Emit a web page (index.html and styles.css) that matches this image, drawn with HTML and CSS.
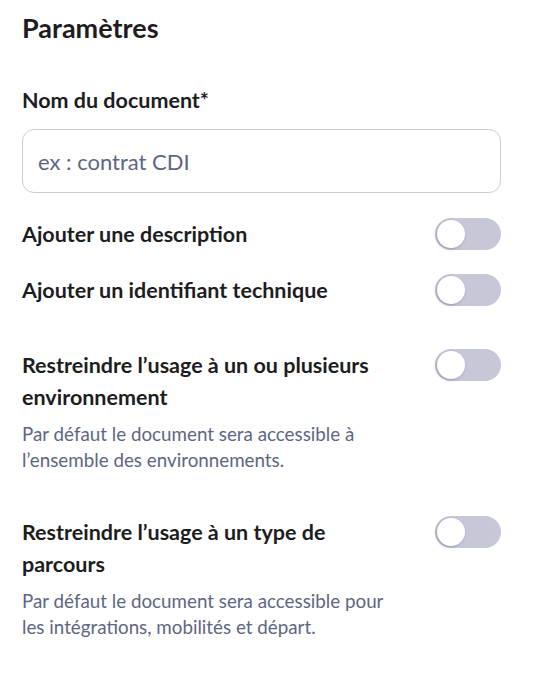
FILE: index.html
```html
<!DOCTYPE html>
<html lang="fr">

<head>
  <meta charset="UTF-8">
  <meta name="viewport" content="width=device-width, initial-scale=1.0">
  <title>Paramètres</title>
  <link rel="stylesheet" href="styles.css">
</head>

<body>

  <div class="settings">

    <h1 class="title">Paramètres</h1>

    <label class="field-label" for="nom">Nom du document*</label>
    <input class="field-input" type="text" id="nom" placeholder="ex : contrat CDI">

    <div class="row row-first">
      <div class="row-text">
        <div class="row-label">Ajouter une description</div>
      </div>
      <label class="switch">
        <input type="checkbox">
        <span class="slider"></span>
      </label>
    </div>

    <div class="row">
      <div class="row-text">
        <div class="row-label">Ajouter un identifiant technique</div>
      </div>
      <label class="switch">
        <input type="checkbox">
        <span class="slider"></span>
      </label>
    </div>

    <div class="row row-large">
      <div class="row-text">
        <div class="row-label">Restreindre l’usage à un ou plusieurs environnement</div>
        <div class="row-desc">Par défaut le document sera accessible à l’ensemble des environnements.</div>
      </div>
      <label class="switch">
        <input type="checkbox">
        <span class="slider"></span>
      </label>
    </div>

    <div class="row row-large">
      <div class="row-text">
        <div class="row-label">Restreindre l’usage à un type de parcours</div>
        <div class="row-desc">Par défaut le document sera accessible pour les intégrations, mobilités et départ.</div>
      </div>
      <label class="switch">
        <input type="checkbox">
        <span class="slider"></span>
      </label>
    </div>

  </div>

</body>

</html>
```

FILE: styles.css
```css
body {
  font-family: Lato, 'Noto Sans', sans-serif;
  background-color: #fff;
  color: #1d1d1f;
  margin: 0;
}

.settings {
  padding: 10px 35px 20px 22px;
}

.title {
  font-size: 27px;
  line-height: 36px;
  font-weight: 700;
  margin: 0 0 39px;
}

.field-label {
  display: block;
  font-size: 21.5px;
  line-height: 30px;
  font-weight: 700;
  margin-bottom: 14px;
}

.field-input {
  display: block;
  width: 100%;
  height: 64px;
  box-sizing: border-box;
  padding: 0 15px;
  border: 1px solid #c9cbdc;
  border-radius: 12px;
  font-family: inherit;
  font-size: 22px;
  color: #1d1d1f;
  outline: none;
}

.field-input::placeholder {
  color: #5e6683;
}

.row {
  display: flex;
  justify-content: space-between;
  align-items: flex-start;
  margin-top: 24px;
}

.row-first {
  margin-top: 25px;
}

.row-large {
  margin-top: 43px;
}

.row-text {
  max-width: 383px;
}

.row-label {
  font-size: 21.5px;
  line-height: 32px;
  font-weight: 700;
}

.row-desc {
  font-size: 18.8px;
  line-height: 26px;
  color: #5e6683;
  margin-top: 8px;
}

.switch {
  position: relative;
  flex-shrink: 0;
  width: 66px;
  height: 32px;
}

.switch input {
  display: none;
}

.slider {
  position: absolute;
  inset: 0;
  background-color: #c6c8d7;
  border-radius: 16px;
  cursor: pointer;
}

.slider::before {
  content: '';
  position: absolute;
  left: 2px;
  top: 2px;
  width: 28px;
  height: 28px;
  border-radius: 50%;
  background-color: #fff;
  box-shadow: -1px 1px 3px rgba(60, 64, 90, 0.35);
}
```
